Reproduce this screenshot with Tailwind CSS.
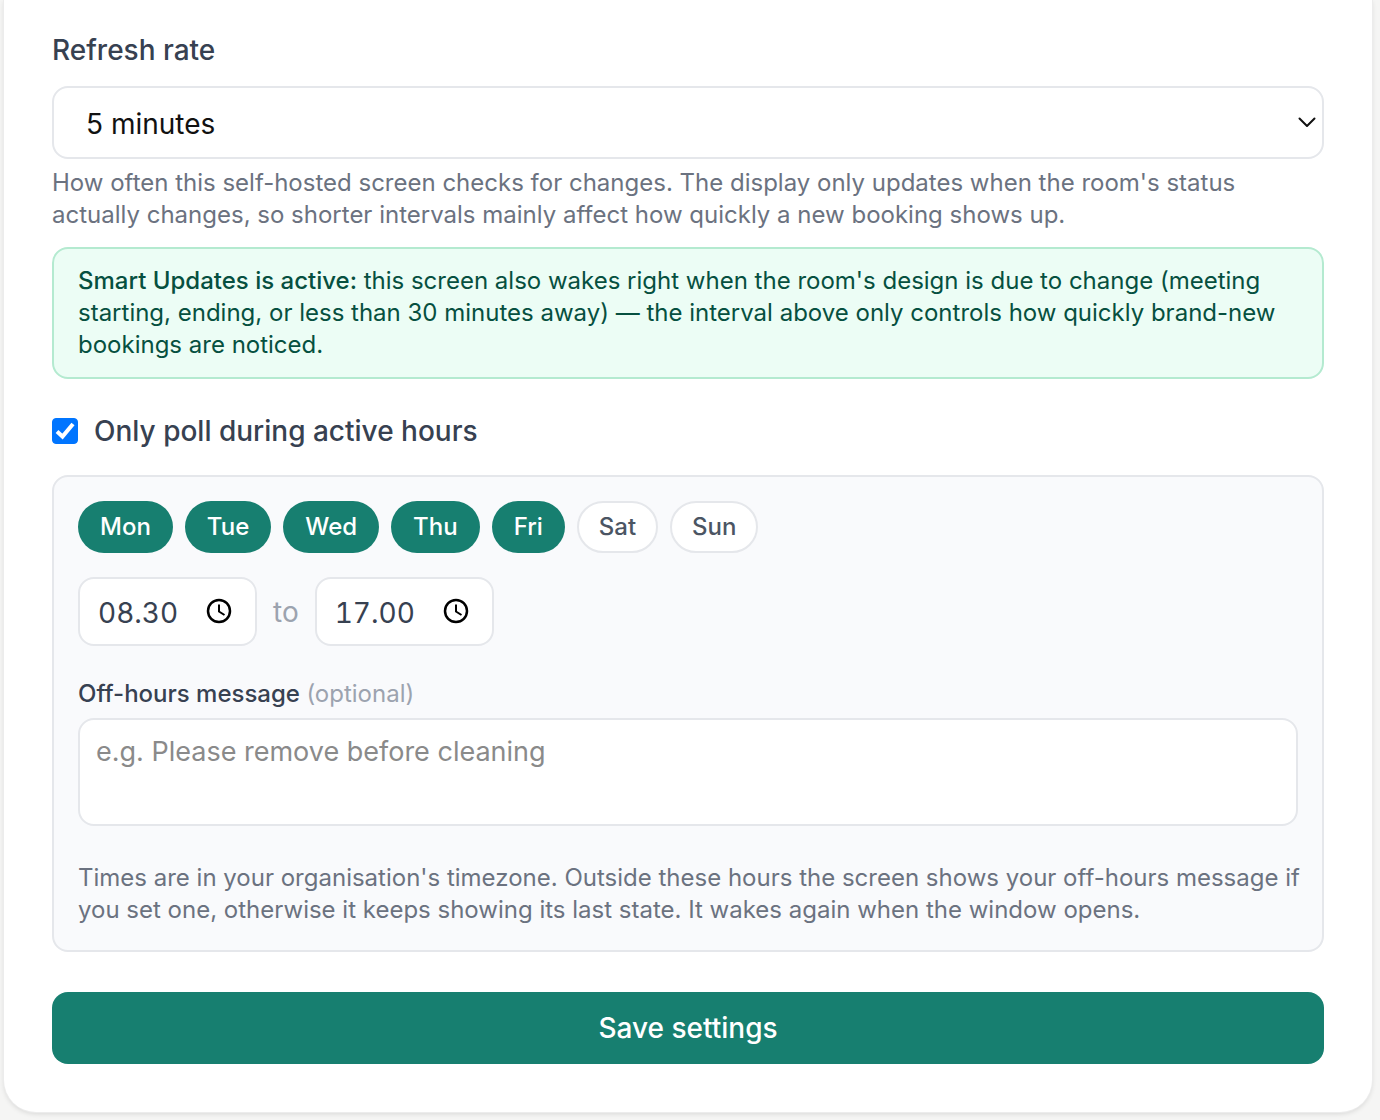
<!DOCTYPE html>
<html lang="en">
<head>
    <meta charset="UTF-8">
    <meta name="viewport" content="width=device-width, initial-scale=1.0">
    <title>Screen settings</title>
    <script src="https://cdn.jsdelivr.net/npm/@tailwindcss/browser@4"></script>
</head>
<body class="bg-[#f5f5f4] font-['Inter',sans-serif] text-[#374151]">
    <form class="ml-1 mr-2 mb-2 px-12 pt-[30px] pb-12 bg-white rounded-b-[32px] shadow-[0_0_0_1px_#ececec,0_2px_5px_rgba(0,0,0,0.12)]">
        <!-- Refresh rate -->
        <label for="refresh-rate" class="block text-[28px] leading-10 font-medium">Refresh rate</label>
        <div class="relative mt-4">
            <select id="refresh-rate" class="block w-full h-[73px] pl-8 pr-12 pt-[2px] appearance-none bg-white border-2 border-[#e5e7eb] rounded-2xl text-[28px] text-[#111]">
                <option>1 minute</option>
                <option selected>5 minutes</option>
                <option>15 minutes</option>
            </select>
            <svg class="absolute right-2 top-7 w-[18px] h-4 pointer-events-none" viewBox="0 0 18 16" fill="none" stroke="#111" stroke-width="2" stroke-linecap="round" stroke-linejoin="round">
                <path d="M1.5 4.5L9 12l7.500-7.500"></path>
            </svg>
        </div>
        <p class="mt-2 text-2xl leading-8 text-[#6b7280]">How often this self-hosted screen checks for changes. The display only updates when the room's status<br>actually changes, so shorter intervals mainly affect how quickly a new booking shows up.</p>

        <div class="mt-4 px-6 py-4 bg-[#ecfdf5] border-2 border-[#b4ead0] rounded-2xl text-2xl leading-8 text-[#065040]">
            <strong class="font-medium">Smart Updates is active:</strong> this screen also wakes right when the room's design is due to change (meeting<br>starting, ending, or less than 30 minutes away) — the interval above only controls how quickly brand-new<br>bookings are noticed.
        </div>

        <!-- Active hours -->
        <label class="mt-8 flex items-center gap-4 text-[28px] leading-10 font-medium">
            <span class="relative flex">
                <input type="checkbox" checked class="peer w-[26px] h-[26px] appearance-none bg-white border border-[#767676] rounded-[4px] checked:bg-[#0075ff] checked:border-[#0075ff]">
                <svg class="absolute inset-0 hidden peer-checked:block pointer-events-none" viewBox="0 0 26 26" fill="none" stroke="#fff" stroke-width="4">
                    <path d="M5 13.500l5.500 5L21 6"></path>
                </svg>
            </span>
            Only poll during active hours
        </label>

        <div class="mt-6 p-6 bg-[#f9fafc] border-2 border-[#e5e7eb] rounded-2xl">
            <div class="flex flex-wrap gap-3 text-2xl leading-8 font-medium">
                <button type="button" class="h-[52px] px-[22px] rounded-full bg-[#177f70] text-white">Mon</button>
                <button type="button" class="h-[52px] px-[22px] rounded-full bg-[#177f70] text-white">Tue</button>
                <button type="button" class="h-[52px] px-[22px] rounded-full bg-[#177f70] text-white">Wed</button>
                <button type="button" class="h-[52px] px-[22px] rounded-full bg-[#177f70] text-white">Thu</button>
                <button type="button" class="h-[52px] px-[22px] rounded-full bg-[#177f70] text-white">Fri</button>
                <button type="button" class="h-[52px] px-5 rounded-full bg-white border-2 border-[#e5e7eb] text-[#4b5563]">Sat</button>
                <button type="button" class="h-[52px] px-5 rounded-full bg-white border-2 border-[#e5e7eb] text-[#4b5563]">Sun</button>
            </div>

            <div class="mt-6 flex items-center gap-4 text-[28px]">
                <div class="relative">
                    <input type="text" aria-label="Start time" value="08.30" class="block w-[179px] h-[69px] pl-[18px] pr-14 pt-[2px] bg-white border-2 border-[#e5e7eb] rounded-2xl tabular-nums">
                    <svg class="absolute right-[25px] top-[21px] w-[26px] h-[26px] pointer-events-none" viewBox="0 0 26 26" fill="none" stroke="#000">
                        <circle cx="13" cy="13" r="11" stroke-width="2.500"></circle>
                        <path d="M13 6.500V13.500l5.500 3.500" stroke-width="2"></path>
                    </svg>
                </div>
                <span class="text-[#9ca3af]">to</span>
                <div class="relative">
                    <input type="text" aria-label="End time" value="17.00" class="block w-[179px] h-[69px] pl-[18px] pr-14 pt-[2px] bg-white border-2 border-[#e5e7eb] rounded-2xl tabular-nums">
                    <svg class="absolute right-[25px] top-[21px] w-[26px] h-[26px] pointer-events-none" viewBox="0 0 26 26" fill="none" stroke="#000">
                        <circle cx="13" cy="13" r="11" stroke-width="2.500"></circle>
                        <path d="M13 6.500V13.500l5.500 3.500" stroke-width="2"></path>
                    </svg>
                </div>
            </div>

            <label for="off-message" class="mt-8 block text-2xl leading-8 font-medium">Off-hours message <span class="font-normal text-[#9ca3af]">(optional)</span></label>
            <textarea id="off-message" placeholder="e.g. Please remove before cleaning" class="mt-2 block w-full h-[108px] px-4 py-3 bg-white border-2 border-[#e5e7eb] rounded-2xl text-[27px] leading-10 resize-none placeholder:text-[#8a8a8a]"></textarea>

            <p class="mt-9 text-2xl leading-8 text-[#6b7280] lg:whitespace-nowrap">Times are in your organisation's timezone. Outside these hours the screen shows your off-hours message if<br>you set one, otherwise it keeps showing its last state. It wakes again when the window opens.</p>
        </div>

        <button type="submit" class="mt-10 block w-full h-[72px] rounded-2xl bg-[#177f70] text-[28px] font-medium text-white">Save settings</button>
    </form>
</body>
</html>
